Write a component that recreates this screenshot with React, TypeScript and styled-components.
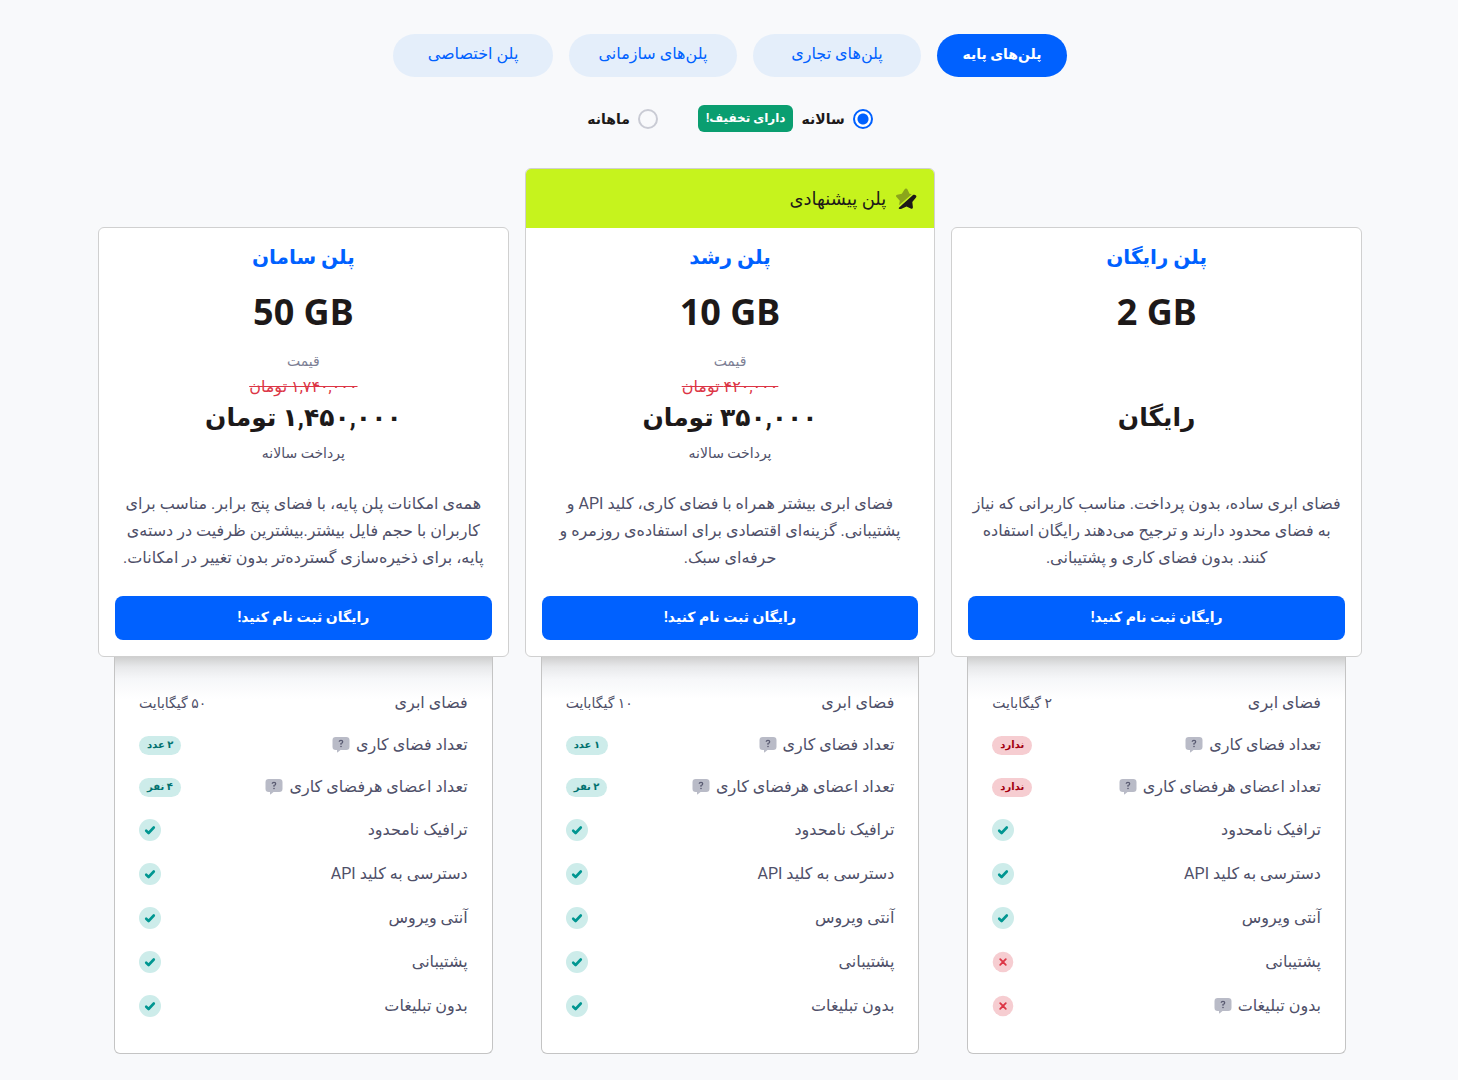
import React, { useState } from "react";
import styled, { createGlobalStyle } from "styled-components";

const GlobalStyle = createGlobalStyle`
  *, *::before, *::after { box-sizing: border-box; }
  body {
    margin: 0;
    background: #f8f9fb;
    color: #1d1919;
    font-family: Roboto, "DejaVu Sans", sans-serif;
    font-size: 16px;
    line-height: 26px;
  }
  h2, p, ul, del { margin: 0; padding: 0; }
  button { font: inherit; border: 0; cursor: pointer; }
`;

const Page = styled.main`
  padding: 34px 96px 26px 98px;
`;

const Tabs = styled.nav`
  display: flex;
  justify-content: center;
  gap: 16px;
`;

const Tab = styled.button<{ $active: boolean; $width: number }>`
  flex: 0 0 ${(p) => p.$width}px;
  height: 43px;
  padding: 0 8px 4px;
  border-radius: 22px;
  background: ${(p) => (p.$active ? "#0061ff" : "#e4eefa")};
  color: ${(p) => (p.$active ? "#fff" : "#0061ff")};
  font-size: ${(p) => (p.$active ? 14 : 16)}px;
  font-weight: ${(p) => (p.$active ? 700 : 400)};
  white-space: nowrap;
`;

const Periods = styled.div`
  display: flex;
  justify-content: center;
  align-items: center;
  gap: 40px;
  height: 27px;
  margin: 28px 0 36px;
`;

const Period = styled.label`
  display: flex;
  align-items: center;
  gap: 8px;
  font-size: 14px;
  font-weight: 700;
  cursor: pointer;
`;

const Radio = styled.input`
  appearance: none;
  width: 20px;
  height: 20px;
  margin: 0;
  border: 2px solid #c9cbd4;
  border-radius: 50%;
  background: #f8f9fb;
  &:checked {
    border-color: #0061ff;
    background: radial-gradient(circle, #0061ff 5px, #fff 6px);
  }
`;

const Discount = styled.span`
  height: 27px;
  padding: 0 8px;
  border-radius: 6px;
  background: #0a9e70;
  color: #fff;
  font-size: 12px;
`;

const Plans = styled.div`
  display: grid;
  grid-template-columns: repeat(3, 1fr);
  align-items: end;
  gap: 16px;
`;

const Card = styled.section`
  overflow: hidden;
  border: 1px solid #d0d0d0;
  border-radius: 6px;
  background: #fff;
  text-align: center;
`;

const Banner = styled.div`
  display: flex;
  align-items: center;
  gap: 8px;
  height: 59px;
  padding: 0 16px;
  background: #c6f31d;
  font-size: 18px;
`;

const CardBody = styled.div`
  display: flex;
  flex-direction: column;
  padding: 12px 16px 16px;
`;

const Title = styled.h2`
  color: #0061ff;
  font-size: 20px;
  line-height: 34px;
`;

const Size = styled.p`
  margin: 10px 0 8px;
  font-family: "Noto Sans", sans-serif;
  font-size: 36px;
  font-weight: 700;
  line-height: 56px;
`;

const PriceBox = styled.div`
  display: flex;
  flex-direction: column;
  align-items: center;
  height: 122px;
  margin-bottom: 20px;
`;

const Caption = styled.p<{ $muted?: boolean }>`
  height: 26px;
  color: ${(p) => (p.$muted ? "#7d7f95" : "#4f5069")};
  font-size: 14px;
`;

const OldPrice = styled.del`
  height: 26px;
  color: #dc3545;
`;

const Price = styled.p`
  height: 40px;
  font-size: 25px;
  font-weight: 700;
  line-height: 36px;
`;

const Description = styled.p`
  height: 81px;
  margin-bottom: 25px;
  color: #4f5069;
  line-height: 27px;
`;

const SignUp = styled.button`
  height: 44px;
  padding: 0 16px 2px;
  border-radius: 8px;
  background: #0061ff;
  color: #fff;
  font-size: 14px;
  font-weight: 700;
`;

const Features = styled.ul`
  display: flex;
  flex-direction: column;
  gap: 16px;
  margin: 0 16px;
  padding: 33px 24px;
  border: 1px solid #c4c4c4;
  border-top: 0;
  border-radius: 0 0 6px 6px;
  background: linear-gradient(#cfcfcf, #e8e9eb 10px, #f6f7f9 22px, #fff 42px);
  color: #4f5069;
  list-style: none;
`;

const Feature = styled.li<{ $tall: boolean }>`
  display: flex;
  align-items: center;
  justify-content: space-between;
  height: ${(p) => (p.$tall ? 28 : 26)}px;
`;

const FeatureName = styled.span`
  display: flex;
  align-items: center;
  gap: 6px;
`;

const Amount = styled.span`
  font-size: 14px;
`;

const Pill = styled.span<{ $bad: boolean }>`
  height: 19px;
  padding: 0 8px;
  border-radius: 10px;
  background: ${(p) => (p.$bad ? "#f6cdd1" : "#cdecea")};
  color: ${(p) => (p.$bad ? "#a30010" : "#00716f")};
  font-size: 10px;
  font-weight: 700;
  line-height: 17px;
`;

const StarIcon = () => (
  <svg width="24" height="24" viewBox="0 0 24 24" aria-hidden="true">
    <path
      fill="#8ba51b"
      d="M12 1.500c.7 0 1.200.4 1.500 1l2 4.300 2.300.5L5 18.300l.8-4.600-3.300-3.600c-.9-1-.5-2.100.8-2.400l4.500-.9 2.700-4.400c.4-.6.900-.9 1.500-.9z"
    />
    <path
      fill="#1d1919"
      d="M19 8.100c.4-.3.800-.4 1.300-.3l.9.2c1.200.3 1.600 1.500.8 2.500L18.300 15l.6 5c.1 1.500-.9 2.200-2.200 1.600L12.500 19.600 7.600 21.700c-.4.200-.8.200-1.200.2H5.600c-.9 0-1.200-.9-.5-1.500z"
    />
  </svg>
);

const HelpIcon = () => (
  <svg width="18" height="18" viewBox="0 0 18 18" role="img" aria-label="راهنما">
    <path
      fill="#b9bbc7"
      d="M3.800 1h10.400q3.300 0 3.300 3.300v6.400q0 3.300-3.300 3.300H8.500l-2.700 2.200q-.8.500-.8-.4V14H3.800Q.5 14 .5 10.700V4.300Q.5 1 3.800 1z"
    />
    <path fill="none" stroke="#5a5b72" strokeWidth="1.300" d="M7.300 5.800q0-1.500 1.700-1.500t1.700 1.500Q10.700 7 9 7.500v1.200" />
    <circle cx="9" cy="10.500" r=".8" fill="#5a5b72" />
  </svg>
);

const YesIcon = () => (
  <svg width="22" height="22" viewBox="0 0 22 22" role="img" aria-label="دارد">
    <circle cx="11" cy="11" r="11" fill="#cdecea" />
    <path
      fill="none"
      stroke="#009691"
      strokeWidth="2.600"
      strokeLinecap="round"
      strokeLinejoin="round"
      d="M7.200 11.700 9.600 14 14.800 8.500"
    />
  </svg>
);

const NoIcon = () => (
  <svg width="22" height="22" viewBox="0 0 22 22" role="img" aria-label="ندارد">
    <circle cx="11" cy="11" r="10.300" fill="#f6cdd1" />
    <path
      fill="none"
      stroke="#dc3545"
      strokeWidth="1.800"
      strokeLinecap="round"
      d="m8.200 8.200 5.600 5.600m0-5.600-5.600 5.600"
    />
  </svg>
);

type Plan = {
  title: string;
  size: string;
  old?: string;
  price: string;
  text: string;
  space: string;
  rooms: string;
  members: string;
  free?: boolean;
  suggested?: boolean;
};

const plans: Plan[] = [
  {
    title: "پلن رایگان",
    size: "2 GB",
    price: "رایگان",
    text: "فضای ابری ساده، بدون پرداخت. مناسب کاربرانی که نیاز به فضای محدود دارند و ترجیح می‌دهند رایگان استفاده کنند. بدون فضای کاری و پشتیبانی.",
    space: "۲ گیگابایت",
    rooms: "ندارد",
    members: "ندارد",
    free: true,
  },
  {
    title: "پلن رشد",
    size: "10 GB",
    old: "۴۲۰,۰۰۰ تومان",
    price: "۳۵۰,۰۰۰ تومان",
    text: "فضای ابری بیشتر همراه با فضای کاری، کلید API و پشتیبانی. گزینه‌ای اقتصادی برای استفاده‌ی روزمره و حرفه‌ای سبک.",
    space: "۱۰ گیگابایت",
    rooms: "۱ عدد",
    members: "۲ نفر",
    suggested: true,
  },
  {
    title: "پلن سامان",
    size: "50 GB",
    old: "۱,۷۴۰,۰۰۰ تومان",
    price: "۱,۴۵۰,۰۰۰ تومان",
    text: "همه‌ی امکانات پلن پایه، با فضای پنج برابر. مناسب برای کاربران با حجم فایل بیشتر.بیشترین ظرفیت در دسته‌ی پایه، برای ذخیره‌سازی گسترده‌تر بدون تغییر در امکانات.",
    space: "۵۰ گیگابایت",
    rooms: "۲ عدد",
    members: "۴ نفر",
  },
];

const tabs = [
  { label: "پلن‌های پایه", width: 130 },
  { label: "پلن‌های تجاری", width: 168 },
  { label: "پلن‌های سازمانی", width: 168 },
  { label: "پلن اختصاصی", width: 160 },
];

function PlanColumn({ plan }: { plan: Plan }) {
  const free = !!plan.free;
  const rows = [
    { name: "فضای ابری", value: <Amount>{plan.space}</Amount> },
    { name: "تعداد فضای کاری", help: true, value: <Pill $bad={free}>{plan.rooms}</Pill> },
    { name: "تعداد اعضای هرفضای کاری", help: true, value: <Pill $bad={free}>{plan.members}</Pill> },
    { name: "ترافیک نامحدود", tall: true, value: <YesIcon /> },
    { name: "دسترسی به کلید API", tall: true, value: <YesIcon /> },
    { name: "آنتی ویروس", tall: true, value: <YesIcon /> },
    { name: "پشتیبانی", tall: true, value: free ? <NoIcon /> : <YesIcon /> },
    { name: "بدون تبلیغات", tall: true, help: free, value: free ? <NoIcon /> : <YesIcon /> },
  ];
  return (
    <article>
      <Card>
        {plan.suggested && (
          <Banner>
            <StarIcon />
            پلن پیشنهادی
          </Banner>
        )}
        <CardBody>
          <Title>{plan.title}</Title>
          <Size dir="ltr">{plan.size}</Size>
          <PriceBox>
            <Caption $muted>{plan.old && "قیمت"}</Caption>
            <OldPrice>{plan.old}</OldPrice>
            <Price>{plan.price}</Price>
            <Caption>{plan.old && "پرداخت سالانه"}</Caption>
          </PriceBox>
          <Description>{plan.text}</Description>
          <SignUp type="button">رایگان ثبت نام کنید!</SignUp>
        </CardBody>
      </Card>
      <Features>
        {rows.map((row) => (
          <Feature key={row.name} $tall={!!row.tall}>
            <FeatureName>
              {row.name}
              {row.help && <HelpIcon />}
            </FeatureName>
            {row.value}
          </Feature>
        ))}
      </Features>
    </article>
  );
}

export default function App() {
  const [tab, setTab] = useState(0);
  const [period, setPeriod] = useState("yearly");
  return (
    <Page dir="rtl" lang="fa">
      <GlobalStyle />
      <Tabs>
        {tabs.map((t, i) => (
          <Tab key={t.label} type="button" $active={i === tab} $width={t.width} onClick={() => setTab(i)}>
            {t.label}
          </Tab>
        ))}
      </Tabs>
      <Periods>
        <Period>
          <Radio type="radio" name="period" checked={period === "yearly"} onChange={() => setPeriod("yearly")} />
          سالانه
          <Discount>دارای تخفیف!</Discount>
        </Period>
        <Period>
          <Radio type="radio" name="period" checked={period === "monthly"} onChange={() => setPeriod("monthly")} />
          ماهانه
        </Period>
      </Periods>
      <Plans>
        {plans.map((plan) => (
          <PlanColumn key={plan.title} plan={plan} />
        ))}
      </Plans>
    </Page>
  );
}
